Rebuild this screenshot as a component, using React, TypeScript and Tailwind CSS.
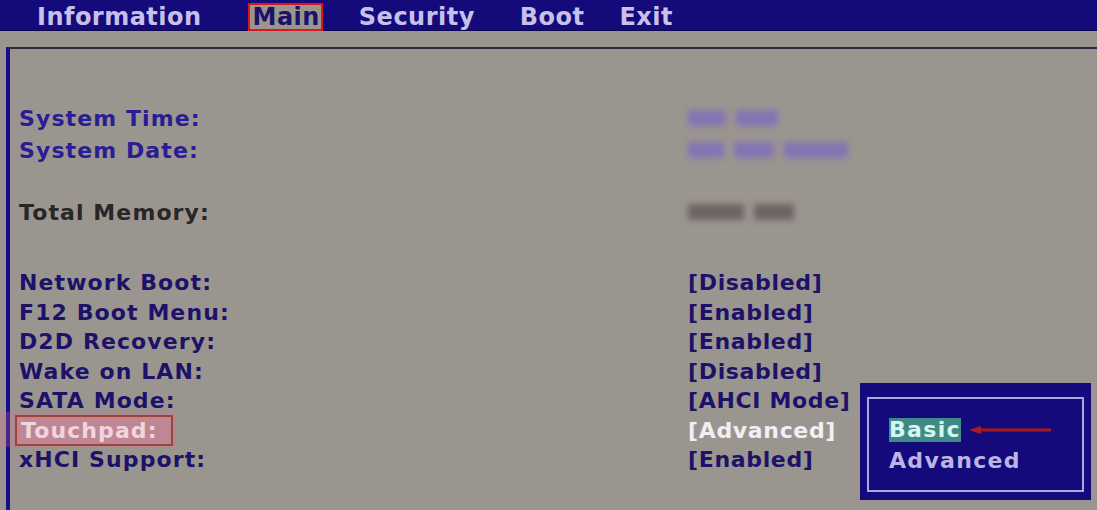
const TABS: { name: string; cls: string }[] = [
  { name: 'Information', cls: 'ml-[37px]' },
  { name: 'Main', cls: 'ml-[46px]' },
  { name: 'Security', cls: 'ml-[36px]' },
  { name: 'Boot', cls: 'ml-[45px]' },
  { name: 'Exit', cls: 'ml-[35px]' },
];

const ROWS: { label: string; value: string; active?: boolean }[] = [
  { label: 'Network Boot:', value: '[Disabled]' },
  { label: 'F12 Boot Menu:', value: '[Enabled]' },
  { label: 'D2D Recovery:', value: '[Enabled]' },
  { label: 'Wake on LAN:', value: '[Disabled]' },
  { label: 'SATA Mode:', value: '[AHCI Mode]' },
  { label: 'Touchpad:', value: '[Advanced]', active: true },
  { label: 'xHCI Support:', value: '[Enabled]' },
];

function Blur({ w, tone }: { w: number[]; tone: 'purple' | 'gray' }) {
  return (
    <div className="flex items-center gap-[10px] blur-[3px]">
      {w.map((width, i) => (
        <span
          key={i}
          className={tone === 'purple' ? 'h-[16px] bg-[#8474b4]' : 'h-[16px] bg-[#6c6462]'}
          style={{ width }}
        />
      ))}
    </div>
  );
}

export default function App() {
  return (
    <div className="relative h-[510px] w-[1097px] overflow-hidden bg-[#9b9590] font-['DejaVu_Sans',sans-serif] font-bold">
      <nav className="flex h-[31px] items-start border-b border-[#0b0550] bg-[#140a7a] pt-[3px] text-[24px] leading-[28px] tracking-[0.02em] text-[#c7c0ea]">
        {TABS.map((tab) =>
          tab.name === 'Main' ? (
            <span
              key={tab.name}
              className={`${tab.cls} flex h-[28px] items-center border-2 border-[#e0141c] bg-[#9b9590] pl-[3px] pr-[1px] text-[#1c1268]`}
            >
              {tab.name}
            </span>
          ) : (
            <span key={tab.name} className={tab.cls}>
              {tab.name}
            </span>
          ),
        )}
      </nav>

      <section className="ml-[6px] mt-[16px] h-[463px] border-l-[4px] border-t-2 border-l-[#1a0c8c] border-t-[#2e2842] pl-[9px] pt-[53px] text-[22px] tracking-[0.03em]">
        <div className="flex h-[32px] items-center text-[#2a1c92]">
          <span className="w-[669px] tracking-[0.05em]">System Time:</span>
          <Blur w={[38, 42]} tone="purple" />
        </div>
        <div className="flex h-[32px] items-center text-[#2a1c92]">
          <span className="w-[669px] tracking-[0.05em]">System Date:</span>
          <Blur w={[36, 40, 64]} tone="purple" />
        </div>
        <div className="mt-[30px] flex h-[32px] items-center text-[#2a2527]">
          <span className="w-[669px] tracking-[0.05em]">Total Memory:</span>
          <Blur w={[56, 40]} tone="gray" />
        </div>

        <div className="mt-[40px] flex flex-col">
          {ROWS.map((row) => (
            <div key={row.label} className="flex h-[29.5px] items-center">
              <span className="w-[669px] tracking-[0.05em]">
                {row.active ? (
                  <span className="-ml-[4px] inline-block w-[158px] border-2 border-[#8a3418] bg-[#b48e98] pl-[4px] leading-[27px] text-[#f8f6f6]">
                    {row.label}
                  </span>
                ) : (
                  <span className="text-[#1c1268]">{row.label}</span>
                )}
              </span>
              <span className={row.active ? 'text-[#f2eef2]' : 'text-[#1c1268]'}>{row.value}</span>
            </div>
          ))}
        </div>
      </section>

      <div className="pointer-events-none absolute left-0 top-[412px] h-[35px] w-[176px] bg-[#e07090]/25" />

      <div className="absolute left-[860px] top-[383px] h-[117px] w-[231px] bg-[#140a7c] px-[7px] pb-[8px] pt-[14px]">
        <div className="flex h-full flex-col border-2 border-[#aea6de] pl-[20px] pt-[19px] text-[22px] tracking-[0.06em]">
          <div className="flex items-center">
            <span className="bg-[#3f8a84] leading-[24px] text-[#d6f6f2]">Basic</span>
            <svg width="84" height="10" viewBox="0 0 84 10" className="ml-[8px]">
              <line x1="6" y1="5" x2="82" y2="5" stroke="#a81a1a" strokeWidth="3" />
              <polygon points="0,5 12,1 12,9" fill="#b01c1c" />
            </svg>
          </div>
          <span className="mt-[3px] leading-[32px] text-[#bcb4e4]">Advanced</span>
        </div>
      </div>
    </div>
  );
}
